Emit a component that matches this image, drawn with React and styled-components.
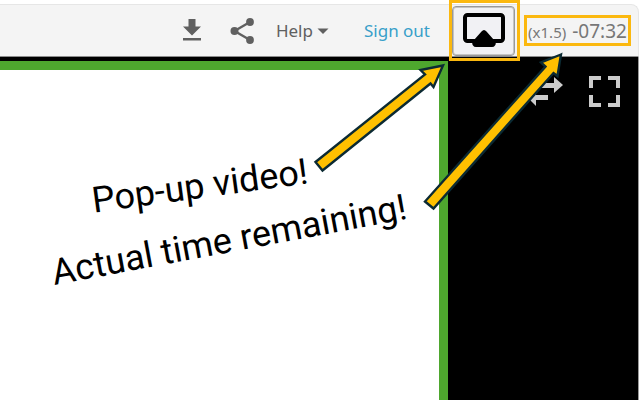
import React from "react";
import styled, { createGlobalStyle } from "styled-components";

const GlobalStyle = createGlobalStyle`
  * { box-sizing: border-box; }
  body { margin: 0; background: #fff; }
`;

const Page = styled.main`
  position: relative;
  display: flex;
  flex-direction: column;
  min-height: 100vh;
  padding: 4px 1px 0 0;
  overflow: hidden;
  background: #fff;
  font-family: "Noto Sans", "Open Sans", sans-serif;
`;

const Toolbar = styled.header`
  display: flex;
  align-items: center;
  justify-content: flex-end;
  height: 53px;
  padding-right: 7px;
  border: solid #e6e6e6;
  border-width: 1px 1px 0 0;
  border-bottom: 1px solid #8c8c8c;
  border-top-right-radius: 8px;
  background: #f4f4f4;
`;

const Actions = styled.nav`
  display: flex;
  align-items: center;
  gap: 22px;
  margin-right: 22px;
`;

const IconGroup = styled.div`
  display: flex;
  gap: 26px;
`;

const PlainButton = styled.button`
  display: flex;
  align-items: center;
  gap: 4px;
  padding: 0;
  border: 0;
  background: none;
  color: #606060;
  font: 17px/24px "Noto Sans", sans-serif;
`;

const HelpButton = styled(PlainButton)`
  margin-right: 13px;
`;

const SignOut = styled.a`
  color: #389fc9;
  font-size: 17px;
  line-height: 24px;
  text-decoration: none;
`;

const PopupHighlight = styled.div`
  position: relative;
  margin-right: 9px;

  &::after {
    content: "";
    position: absolute;
    inset: -6px -5px -5px -3px;
    border: 3px solid #fbb80f;
    pointer-events: none;
  }
`;

const PopupButton = styled.button`
  display: flex;
  align-items: center;
  justify-content: center;
  width: 63px;
  height: 50px;
  padding: 0;
  border: 1px solid #999;
  border-radius: 4px;
  background: #f1f1f4;
  box-shadow: inset 0 0 0 1px #c4c4c4;
`;

const TimeRemaining = styled.div`
  display: flex;
  align-items: baseline;
  justify-content: center;
  gap: 6px;
  width: 107px;
  height: 31px;
  border: 3px solid #fbb80f;
  color: #777;
  font-size: 19px;
  line-height: 26px;
  white-space: nowrap;
`;

const Speed = styled.span`
  font-size: 15px;
`;

const Player = styled.section`
  display: flex;
  flex: 1;
  padding-top: 4px;
  border-right: 1px solid #999;
  background: #000;
`;

const Slide = styled.div`
  display: flex;
  flex: 1;
  flex-direction: column;
  align-items: flex-end;
  gap: 8px;
  padding-top: 93px;
  border: solid #4ea72e;
  border-width: 9px 9px 0 0;
  background: #fff;
`;

const Note = styled.p`
  margin: 0 ${(p) => p.$inset}px 0 0;
  color: #000;
  font: 36px/46px Roboto, sans-serif;
  white-space: nowrap;
  transform: rotate(${(p) => p.$angle}deg);
`;

const VideoPane = styled.aside`
  display: flex;
  align-items: flex-start;
  justify-content: flex-end;
  gap: 26px;
  width: 190px;
  padding: 15px 18px 0 0;
`;

const Arrows = styled.svg`
  position: absolute;
  top: 0;
  right: 0;
  pointer-events: none;
`;

export default function App() {
  return (
    <Page>
      <GlobalStyle />
      <Toolbar>
        <Actions>
          <IconGroup>
            <PlainButton aria-label="Download">
              <svg width="24" height="24" viewBox="0 0 24 24" fill="#606060">
                <path d="M8.500 0h7v7.500h5.500l-9 9-9-9h5.500zM3 19h18v2.500H3z" />
              </svg>
            </PlainButton>
            <PlainButton aria-label="Share">
              <svg width="24" height="26" viewBox="0 0 24 26" fill="#606060">
                <path d="M20 4 4.500 13 20 22" fill="none" stroke="#606060" strokeWidth="2.4" />
                <circle cx="20" cy="4" r="3.900" />
                <circle cx="4.500" cy="13" r="4" />
                <circle cx="20" cy="22" r="3.900" />
              </svg>
            </PlainButton>
          </IconGroup>
          <HelpButton>
            Help
            <svg width="12" height="6" viewBox="0 0 12 6" fill="#606060">
              <path d="M.5.5h11L6 6z" />
            </svg>
          </HelpButton>
          <SignOut href="#sign-out">Sign out</SignOut>
        </Actions>
        <PopupHighlight>
          <PopupButton aria-label="Pop-up video">
            <svg width="44" height="38" viewBox="0 0 44 38">
              <rect x="3" y="3" width="38" height="26" rx="2.500" fill="none" stroke="#000" strokeWidth="4" />
              <path d="M19.500 19.500Q22 16.500 24.500 19.500L32 28Q35 31 33 33.500Q32 35 30 35H14Q12 35 11 33.500Q9 31 12 28Z" />
            </svg>
          </PopupButton>
        </PopupHighlight>
        <TimeRemaining>
          <Speed>(x1.5)</Speed>
          <span>-07:32</span>
        </TimeRemaining>
      </Toolbar>
      <Player>
        <Slide>
          <Note $inset={130} $angle={-7.8}>Pop-up video!</Note>
          <Note $inset={30} $angle={-10.6}>Actual time remaining!</Note>
        </Slide>
        <VideoPane>
          <PlainButton aria-label="Swap views">
            <svg width="36" height="31" viewBox="0 0 36 31" fill="#ccc">
              <path d="M10 7h17V1l9 8-9 8v-5H10zM21 19v5H9v6l-8-8 8-8v5z" />
            </svg>
          </PlainButton>
          <PlainButton aria-label="Full screen">
            <svg width="31" height="31" viewBox="0 0 31 31">
              <path
                d="M2 12V2h10M19 2h10v10M29 19v10H19M12 29H2V19"
                fill="none"
                stroke="#ccc"
                strokeWidth="4"
              />
            </svg>
          </PlainButton>
        </VideoPane>
      </Player>
      <Arrows
        width="640"
        height="400"
        viewBox="0 0 640 400"
        fill="#ffc000"
        stroke="#0b2a33"
        strokeWidth="2.4"
        aria-hidden="true"
      >
        <path d="M443 65.500 420.500 70 425 74.500 315.500 162 322.500 170.500 430.500 83.500 433.500 87Z" />
        <path d="M561 54.500 541 62.500 545.500 66.500 425 201.500 433.500 208.500 553.500 73 557.500 76Z" />
      </Arrows>
    </Page>
  );
}
